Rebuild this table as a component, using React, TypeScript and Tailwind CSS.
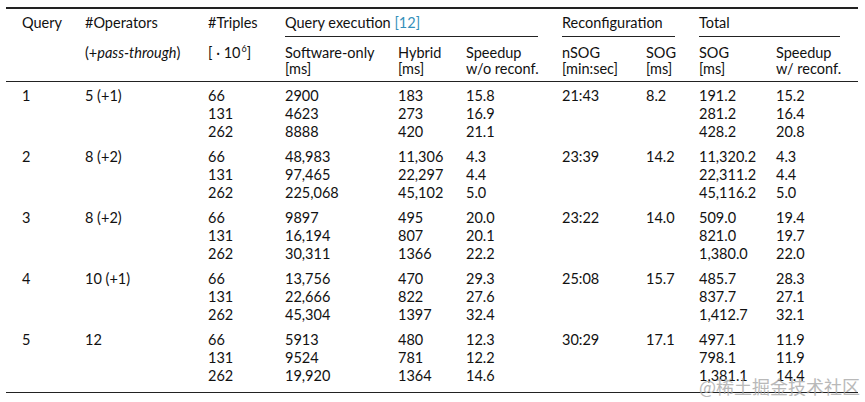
import React from "react";

const COLS = "grid grid-cols-[63px_123px_77px_113px_68px_96px_84px_53px_77px_84px] pl-[16px]";

type Group = {
  q: string;
  ops: string;
  tr: string[];
  sw: string[];
  hy: string[];
  sp: string[];
  nsog: string;
  sog: string;
  tot: string[];
  sp2: string[];
};

const groups: Group[] = [
  { q: "1", ops: "5 (+1)", tr: ["66", "131", "262"], sw: ["2900", "4623", "8888"], hy: ["183", "273", "420"], sp: ["15.8", "16.9", "21.1"], nsog: "21:43", sog: "8.2", tot: ["191.2", "281.2", "428.2"], sp2: ["15.2", "16.4", "20.8"] },
  { q: "2", ops: "8 (+2)", tr: ["66", "131", "262"], sw: ["48,983", "97,465", "225,068"], hy: ["11,306", "22,297", "45,102"], sp: ["4.3", "4.4", "5.0"], nsog: "23:39", sog: "14.2", tot: ["11,320.2", "22,311.2", "45,116.2"], sp2: ["4.3", "4.4", "5.0"] },
  { q: "3", ops: "8 (+2)", tr: ["66", "131", "262"], sw: ["9897", "16,194", "30,311"], hy: ["495", "807", "1366"], sp: ["20.0", "20.1", "22.2"], nsog: "23:22", sog: "14.0", tot: ["509.0", "821.0", "1,380.0"], sp2: ["19.4", "19.7", "22.0"] },
  { q: "4", ops: "10 (+1)", tr: ["66", "131", "262"], sw: ["13,756", "22,666", "45,304"], hy: ["470", "822", "1397"], sp: ["29.3", "27.6", "32.4"], nsog: "25:08", sog: "15.7", tot: ["485.7", "837.7", "1,412.7"], sp2: ["28.3", "27.1", "32.1"] },
  { q: "5", ops: "12", tr: ["66", "131", "262"], sw: ["5913", "9524", "19,920"], hy: ["480", "781", "1364"], sp: ["12.3", "12.2", "14.6"], nsog: "30:29", sog: "17.1", tot: ["497.1", "798.1", "1,381.1"], sp2: ["11.9", "11.9", "14.4"] },
];

function Stack({ v }: { v: string[] }) {
  return (
    <div className="flex flex-col">
      {v.map((x, i) => (
        <span key={i} className="h-[18px] leading-[18px] whitespace-nowrap">
          {x}
        </span>
      ))}
    </div>
  );
}

function One({ v }: { v: string }) {
  return <span className="block h-[18px] leading-[18px] whitespace-nowrap">{v}</span>;
}

export default function App() {
  return (
    <div
      className="relative w-[865px] h-[402px] bg-white overflow-hidden text-[#111] text-[14.5px]"
      style={{ fontFamily: "Lato, 'Noto Sans', sans-serif" }}
    >
      <div className="pl-[6px] pt-[7px]">
        <div className="w-[852px] border-t-2 border-[#222] border-b border-b-[#222]">
          {/* header row 1 */}
          <div className={COLS}>
            <div className="pt-[5px] h-[28px] leading-[18px]">Query</div>
            <div className="pt-[5px] leading-[18px]">#Operators</div>
            <div className="pt-[5px] leading-[18px]">#Triples</div>
            <div className="col-span-3 mr-[24px] border-b border-[#222] pt-[5px] leading-[18px] whitespace-nowrap">
              Query execution <span className="text-[#3590bb]">[12]</span>
            </div>
            <div className="col-span-2 mr-[24px] border-b border-[#222] pt-[5px] leading-[18px]">Reconfiguration</div>
            <div className="col-span-2 mr-[20px] border-b border-[#222] pt-[5px] leading-[18px]">Total</div>
          </div>
          {/* header row 2 */}
          <div className={`${COLS} pt-[8px] pb-[4px] border-b border-[#222] leading-[16px]`}>
            <div />
            <div className="whitespace-nowrap">
              (+<span className="italic">pass-through</span>)
            </div>
            <div className="whitespace-nowrap">
              [ · 10<span className="text-[9px] relative top-[-6px] ml-[1px]">6</span>]
            </div>
            <div>
              <div>Software-only</div>
              <div>[ms]</div>
            </div>
            <div>
              <div>Hybrid</div>
              <div>[ms]</div>
            </div>
            <div className="whitespace-nowrap">
              <div>Speedup</div>
              <div>w/o reconf.</div>
            </div>
            <div>
              <div>nSOG</div>
              <div>[min:sec]</div>
            </div>
            <div>
              <div>SOG</div>
              <div>[ms]</div>
            </div>
            <div>
              <div>SOG</div>
              <div>[ms]</div>
            </div>
            <div className="whitespace-nowrap">
              <div>Speedup</div>
              <div>w/ reconf.</div>
            </div>
          </div>
          {/* data */}
          <div className="flex flex-col gap-[7px] pt-[5px] pb-[7px]">
            {groups.map((g) => (
              <div key={g.q} className={COLS}>
                <One v={g.q} />
                <One v={g.ops} />
                <Stack v={g.tr} />
                <Stack v={g.sw} />
                <Stack v={g.hy} />
                <Stack v={g.sp} />
                <One v={g.nsog} />
                <One v={g.sog} />
                <Stack v={g.tot} />
                <Stack v={g.sp2} />
              </div>
            ))}
          </div>
        </div>
      </div>
      <div
        className="absolute left-[699px] top-[373px] text-[18px] text-[#a8a8a8] opacity-80 whitespace-nowrap"
        style={{ fontFamily: "'Noto Sans CJK SC', sans-serif" }}
      >
        @稀土掘金技术社区
      </div>
    </div>
  );
}
